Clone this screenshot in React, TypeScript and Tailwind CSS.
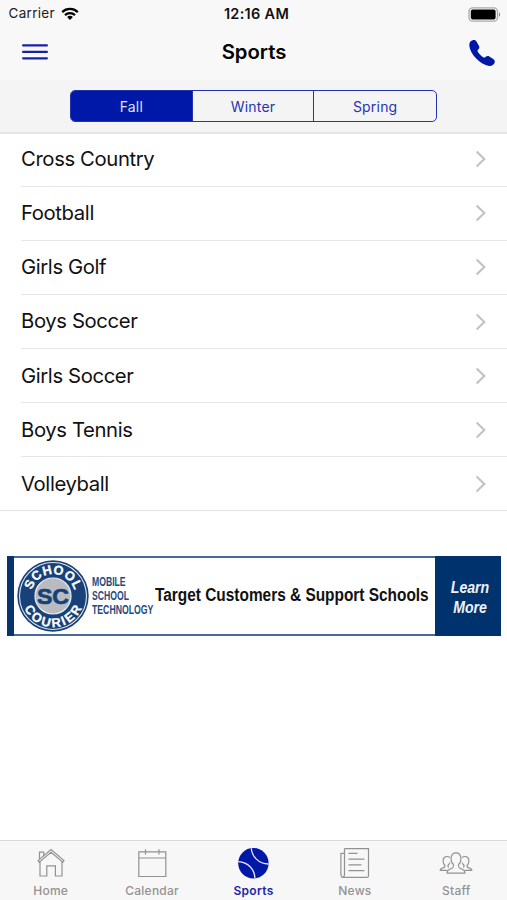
import type { ReactNode } from "react";

const sports = [
  "Cross Country",
  "Football",
  "Girls Golf",
  "Boys Soccer",
  "Girls Soccer",
  "Boys Tennis",
  "Volleyball",
];

function StatusBar() {
  return (
    <div className="grid h-7 grid-cols-3 items-center text-[13.5px] leading-none text-[#222]">
      <div className="flex items-center gap-[6px] pl-[8.5px]">
        <span className="tracking-[0.3px]">Carrier</span>
        <svg width="18" height="14" viewBox="0 0 18 14" fill="none" stroke="#000" strokeWidth="2.2">
          <path d="M1.2 5.1a11.2 11.2 0 0 1 15.6 0" />
          <path d="M4 8.1a7.2 7.2 0 0 1 10 0" />
          <path d="M9 13 6.1 10.1a4.2 4.2 0 0 1 5.8 0Z" fill="#000" stroke="none" />
        </svg>
      </div>
      <div className="pl-[6px] text-center text-[14.5px] font-semibold tracking-[0.3px] text-[#111]">12:16 AM</div>
      <div className="flex justify-end pr-[6px]">
        <svg width="33" height="15" viewBox="0 0 33 15">
          <rect x="1" y="0.8" width="28.5" height="13.4" rx="3.6" fill="#f8f8f8" stroke="#aaa" strokeWidth="1.3" />
          <rect x="2.8" y="2.6" width="24.8" height="9.8" rx="2" fill="#000" />
          <path d="M31 5.2c1.5.7 1.5 3.9 0 4.6Z" fill="#888" />
        </svg>
      </div>
    </div>
  );
}

function NavBar() {
  return (
    <div className="grid h-[52px] grid-cols-3 items-center pr-[11px] pl-[22px]">
      <svg width="26" height="16" viewBox="0 0 26 16" stroke="#1720a8" strokeWidth="2.2" strokeLinecap="round" className="-mt-1">
        <path d="M1.100 1.400h23.800M1.100 7.900h23.800M1.100 14.300h23.800" />
      </svg>
      <h1 className="-mt-1 -ml-[10px] text-center text-[20.3px] font-semibold text-black">Sports</h1>
      <svg width="28" height="28" viewBox="0 0 28 28" fill="#0018a8" className="-mt-[2px] justify-self-end">
        <path d="M5.2 1C2.7 1.4 1 3.8 1.3 6.4 1.8 11 4.300 15.600 8.200 19.600 12 23.500 16.700 26.400 21 26.900 23.600 27.200 25.900 25.800 26.700 23.400 27.100 22.100 26.500 20.900 25.200 20.100L21.300 17.500C20.300 16.800 19 16.900 18 17.600L16.900 18.400C15.800 19 14.300 17.800 12.200 15.700 10.200 13.600 9 12 9.700 11L10.700 9.900C11.500 9 11.500 7.800 10.900 6.700L8.300 2.300C7.600 1.200 6.500.8 5.200 1Z" />
      </svg>
    </div>
  );
}

function Segments() {
  return (
    <div className="flex h-[54px] justify-center border-b-2 border-[#e5e5e5] bg-[#f4f4f4] pt-[10px]">
      <div className="grid h-8 w-[367px] grid-cols-3 divide-x divide-[#2632b0] overflow-hidden rounded-[5px] border-[1.5px] border-[#2632b0] text-[14px] tracking-[0.2px] text-[#2734b1]">
        <button className="bg-[#0018a8] text-[#dfe2f5]">Fall</button>
        <button>Winter</button>
        <button>Spring</button>
      </div>
    </div>
  );
}

function SportRow({ name, last }: { name: string; last: boolean }) {
  return (
    <li className={last ? "border-b border-[#e4e4e4]" : ""}>
      <div
        className={
          last
            ? "ml-[21px] flex h-[52.8px] items-center justify-between pr-5"
            : "ml-[21px] flex h-[54.15px] items-center justify-between border-b border-[#e6e6e6] pr-5"
        }
      >
        <span className="text-[20.3px] tracking-[-0.38px] text-[#111]">{name}</span>
        <svg width="12" height="18" viewBox="0 0 12 18" fill="none" stroke="#c3c3c6" strokeWidth="2.2">
          <path d="m1.600 1.500 7.700 7.500-7.700 7.500" />
        </svg>
      </div>
    </li>
  );
}

function CourierLogo() {
  return (
    <svg width="72" height="72" viewBox="0 0 72 72" className="shrink-0">
      <defs>
        <path id="logo-top" d="M14 36a22 22 0 0 1 44 0" />
        <path id="logo-bottom" d="M4.800 36a31.200 31.200 0 0 0 62.400 0" />
      </defs>
      <circle cx="36" cy="36" r="35.700" fill="#174178" />
      <circle cx="36" cy="36" r="33.500" fill="none" stroke="#dfe6ef" strokeWidth="1.100" />
      <circle cx="36" cy="36" r="18" fill="#b9bbc0" stroke="#e8edf3" strokeWidth="1.200" />
      <g
        fill="#fff"
        stroke="#fff"
        strokeWidth=".3"
        fontFamily="'Liberation Sans', Arial, sans-serif"
        fontWeight="bold"
        fontSize="12.800"
        textAnchor="middle"
      >
        <text>
          <textPath href="#logo-top" startOffset="50%" textLength="57">SCHOOL</textPath>
        </text>
        <text>
          <textPath href="#logo-bottom" startOffset="50%" textLength="73">COURIER</textPath>
        </text>
      </g>
      <text
        x="36"
        y="43.700"
        textAnchor="middle"
        textLength="32"
        lengthAdjust="spacingAndGlyphs"
        fontFamily="'Liberation Sans', Arial, sans-serif"
        fontWeight="bold"
        fontSize="22.500"
        fill="#174178"
        stroke="#174178"
        strokeWidth=".7"
      >
        SC
      </text>
    </svg>
  );
}

function Banner() {
  return (
    <div className="mt-[44.8px] mr-[6px] ml-[7px] flex h-20 items-stretch font-['Liberation_Sans',Arial,sans-serif] font-bold">
      <div className="w-[7px] bg-[#07346d]" />
      <div className="flex w-[421px] items-center border-y-2 border-[#476b98] bg-white pl-[2.5px]">
        <CourierLogo />
        <div className="ml-[3px] w-[63.500px] shrink-0 text-[12px] leading-[14.3px] text-[#23497f]">
          <div className="origin-left scale-x-[0.72]">MOBILE</div>
          <div className="origin-left scale-x-[0.72]">SCHOOL</div>
          <div className="origin-left scale-x-[0.725]">TECHNOLOGY</div>
        </div>
        <div className="w-[274px] shrink-0 pb-[2px] text-[18px] whitespace-nowrap text-[#111]">
          <div className="origin-left scale-x-[0.856]">Target Customers &amp; Support Schools</div>
        </div>
      </div>
      <div className="flex flex-1 flex-col justify-center bg-[#00336d] pt-[3px] pl-1 text-center text-[17px] leading-[20px] text-[#eef2f7] italic">
        <div className="scale-x-[0.83]">Learn</div>
        <div className="scale-x-[0.83]">More</div>
      </div>
    </div>
  );
}

function Tab({ label, active, children }: { label: string; active?: boolean; children: ReactNode }) {
  return (
    <div className={active ? "flex flex-col items-center text-[#1a28ad]" : "flex flex-col items-center text-[#929292]"}>
      <svg width="34" height="32" viewBox="0 0 34 32" fill="none" stroke="currentColor" strokeWidth="1.200">
        {children}
      </svg>
      <span
        className={
          active
            ? "mt-[5px] text-[12px] leading-[14px] font-semibold tracking-[0.3px]"
            : "mt-[5px] text-[12px] leading-[14px] font-medium tracking-[0.25px]"
        }
      >
        {label}
      </span>
    </div>
  );
}

function TabBar() {
  return (
    <nav className="grid h-[60px] grid-cols-5 border-t border-[#d9d9d9] bg-[#f7f7f7] pt-[6px]">
      <Tab label="Home">
        <path d="M4 13.600 17 2.600 30 13.600 28.800 15.200 17 5.400 5.200 15.200ZM5.500 12V5.200h4.200v3.400M6 14.800V29h6.800V18.800h8.600V29H28V14.800" />
      </Tab>
      <Tab label="Calendar">
        <path d="M3.800 4.800h27v24.700h-27ZM3.800 11h27M10.500 2.200v5.300M24 2.200v5.300" />
      </Tab>
      <Tab label="Sports" active>
        <circle cx="17.400" cy="16.200" r="15.200" fill="#0018a8" stroke="none" />
        <path d="M15.300 1.200C15.800 9.500 22.500 16.700 32.500 17M2.300 14.700C12 15.300 18.600 22 18.900 31.300" stroke="#e8eafa" strokeWidth="1.300" />
      </Tab>
      <Tab label="News">
        <path d="M6.500 1.600h24v27.200c0 1-.7 1.600-1.600 1.600H5.600c-1.700 0-2.700-1-2.700-2.600V6.300h3.600M6.500 1.600v26c0 1.600-.8 2.500-1.700 2.500M10.500 6.300h9M10.500 12.100h16M10.500 17.900h13M10.500 23.700h16" />
      </Tab>
      <Tab label="Staff">
        <path d="M14.300 17.200C10.900 14.500 11.200 5.800 17 5.800s6.100 8.700 2.700 11.400c-.7 3 .1 3.800 2.400 4.500 2.500.8 3.800 1.900 3.800 4.500H8.100c0-2.600 1.300-3.700 3.800-4.500 2.300-.7 3.100-1.500 2.400-4.500Z" />
        <path d="M10.900 10.400C6.100 7.900 3.600 11.200 4.200 14.800c.1 1.600.6 2.700 1.700 3.500.3 1.900-.6 2.300-2.500 2.900-1.400.4-2.100 1.100-2.200 2.200h7.400M9.900 20.500c-1-.6-1.200-1-.9-2.200 1-.8 1.500-1.600 1.800-2.700" />
        <path d="M23.100 10.400c4.800-2.500 7.300.8 6.700 4.400-.1 1.600-.6 2.700-1.700 3.500-.3 1.900.6 2.300 2.500 2.900 1.400.4 2.100 1.100 2.200 2.200h-7.400M24.100 20.500c1-.6 1.200-1 .9-2.200-1-.8-1.500-1.600-1.800-2.700" />
      </Tab>
    </nav>
  );
}

export default function App() {
  return (
    <div className="flex h-[900px] w-[507px] flex-col overflow-hidden bg-white font-[Inter,Roboto,sans-serif]">
      <header className="bg-[#f8f8f8]">
        <StatusBar />
        <NavBar />
        <Segments />
      </header>
      <main className="-mt-[1.4px] flex-1">
        <ul>
          {sports.map((name, i) => (
            <SportRow key={name} name={name} last={i === sports.length - 1} />
          ))}
        </ul>
        <Banner />
      </main>
      <TabBar />
    </div>
  );
}
